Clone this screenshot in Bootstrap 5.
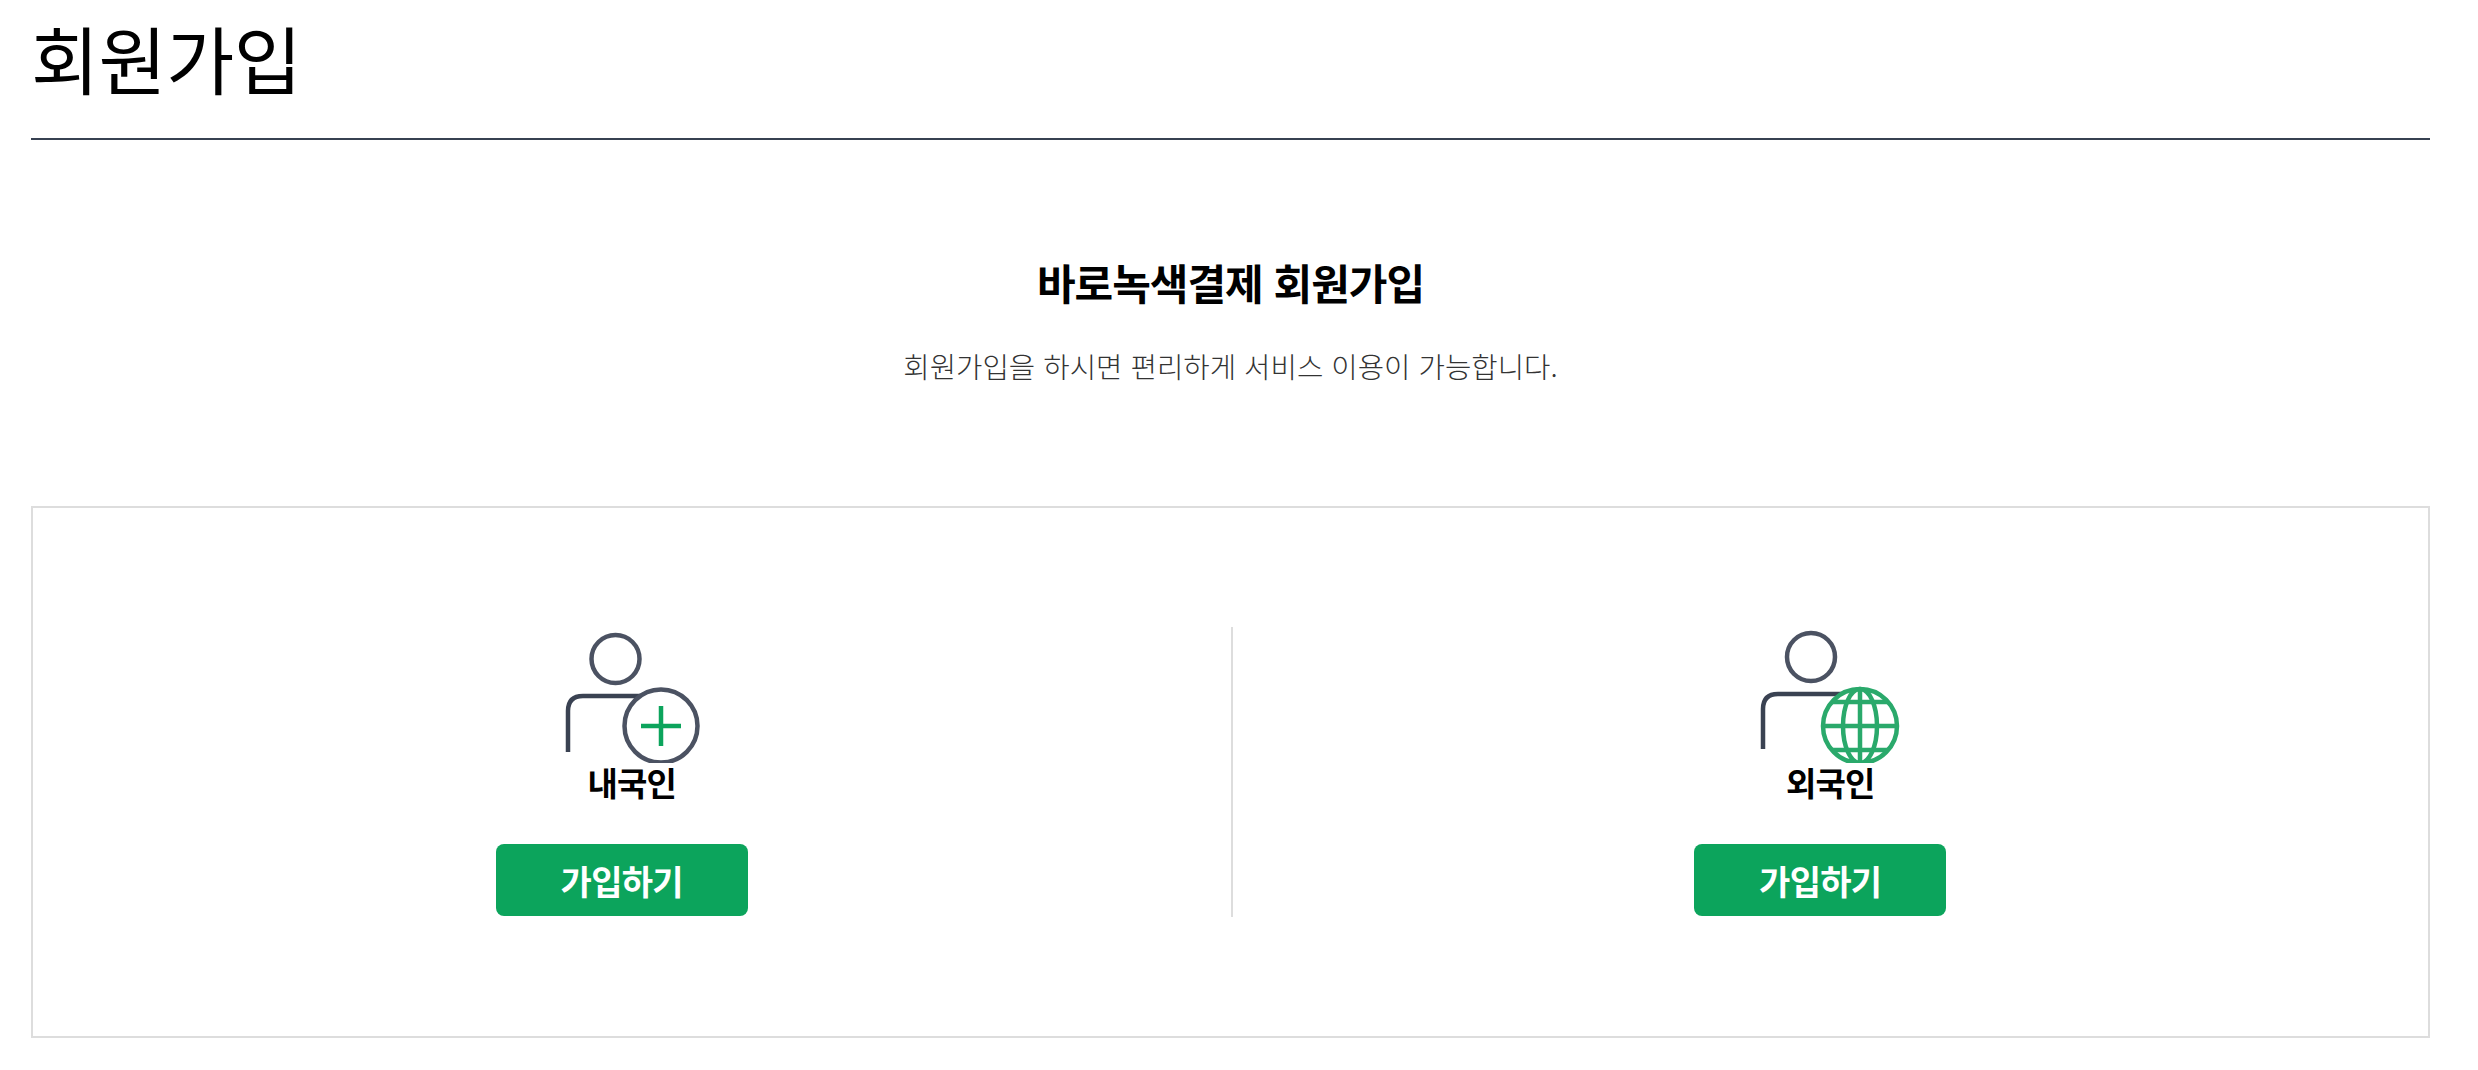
<!DOCTYPE html>
<html lang="ko">
<head>
    <meta charset="UTF-8">
    <meta name="viewport" content="width=device-width, initial-scale=1.0">
    <title>회원가입</title>
    <link href="https://cdn.jsdelivr.net/npm/bootstrap@5.3.2/dist/css/bootstrap.min.css" rel="stylesheet">
    <style>
        body { background: #fff; color: #000; font-family: "Noto Sans CJK KR", "Noto Sans", sans-serif; }
        .join-page { padding: 0 48px 0 31px; }
        .join-title { font-size: 74px; font-weight: 400; line-height: 104px; margin: 0; padding: 5px 0 29px; border-bottom: 2px solid #374151; letter-spacing: -.5px; }
        .join-intro { padding-top: 112px; height: 366px; }
        .join-intro h2 { font-size: 42px; font-weight: 700; line-height: 60px; margin: 0 0 33px; letter-spacing: -1px; }
        .join-intro p { font-size: 28.700px; line-height: 42px; color: #333; margin: 0; font-weight: 300; }
        .join-box { border: 2px solid #ddd; padding: 119px 0; height: 532px; }
        .join-col { height: 290px; padding-top: 1px; }
        .join-col + .join-col { border-left: 2px solid #ddd; }
        .join-icon { display: block; width: 145px; height: 135px; }
        .join-label { font-size: 33px; font-weight: 700; line-height: 46px; margin: -4px 0 39px; letter-spacing: -.8px; }
        .join-btn { width: 252px; height: 72px; margin-right: 20px; background: #0ca45c; border: 0; border-radius: 8px; color: #fff; font-size: 34px; font-weight: 700; padding: 0; letter-spacing: -.7px; }
    </style>
</head>
<body>
    <div class="join-page">
        <h1 class="join-title">회원가입</h1>

        <div class="join-intro text-center">
            <h2>바로녹색결제 회원가입</h2>
            <p>회원가입을 하시면 편리하게 서비스 이용이 가능합니다.</p>
        </div>

        <div class="join-box d-flex">
            <!-- 내국인 -->
            <div class="join-col w-50 d-flex flex-column align-items-center">
                <svg class="join-icon" viewBox="0 0 145 135" fill="none" stroke-width="4.500">
                    <circle cx="56.500" cy="31" r="24" stroke="#4b5262"/>
                    <path d="M9 124V83Q9 68 24 68H84" stroke="#3a4252"/>
                    <circle cx="102" cy="98" r="36.500" fill="#fff" stroke="#4b5262"/>
                    <path d="M82 98H122M102 78V118" stroke="#0ca45c"/>
                </svg>
                <p class="join-label">내국인</p>
                <button class="join-btn" type="button">가입하기</button>
            </div>
            <!-- 외국인 -->
            <div class="join-col w-50 d-flex flex-column align-items-center">
                <svg class="join-icon" viewBox="0 0 145 135" fill="none" stroke-width="4.500">
                    <circle cx="53" cy="29" r="24" stroke="#4b5262"/>
                    <path d="M5 121V81Q5 66 20 66H84" stroke="#3a4252"/>
                    <g stroke="#2aa96b">
                        <circle cx="102" cy="98" r="37" fill="#fff"/>
                        <ellipse cx="102" cy="98" rx="17" ry="37"/>
                        <path d="M102 61V135M65 98H139M74.500 74H129.500M74.500 122H129.500"/>
                    </g>
                </svg>
                <p class="join-label">외국인</p>
                <button class="join-btn" type="button">가입하기</button>
            </div>
        </div>
    </div>
    <script src="https://cdn.jsdelivr.net/npm/bootstrap@5.3.2/dist/js/bootstrap.bundle.min.js"></script>
</body>
</html>
